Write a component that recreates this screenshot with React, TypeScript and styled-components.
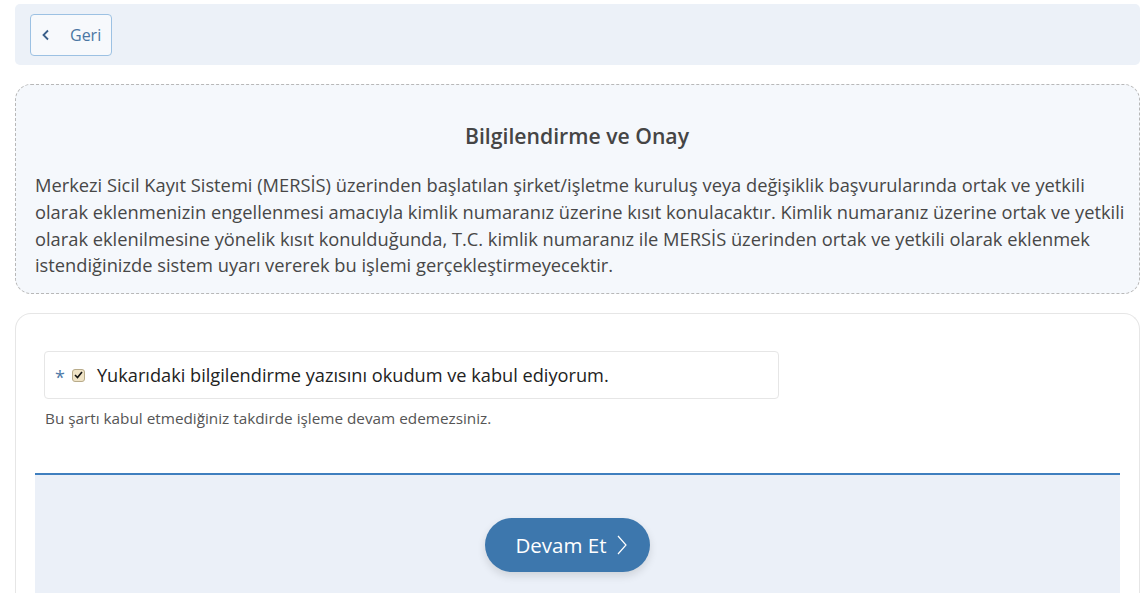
import React from "react";
import styled, { createGlobalStyle } from "styled-components";

const Global = createGlobalStyle`
  html, body { margin: 0; padding: 0; background: #fff; }
  body { font-family: "Open Sans", "Noto Sans", sans-serif; color: #444; }
  * { box-sizing: border-box; }
`;

const Page = styled.div`
  padding: 4px 1px 0 15px;
  display: flex;
  flex-direction: column;
  height: 593px;
  overflow: hidden;
`;

const TopBar = styled.div`
  background: #ecf1f8;
  border-radius: 5px;
  height: 61px;
  padding: 9px 15px;
  display: flex;
  align-items: center;
`;

const BackButton = styled.button`
  display: flex;
  align-items: center;
  gap: 19px;
  height: 42px;
  width: 82px;
  padding: 0 0 0 10px;
  border: 1px solid #9cc1e3;
  border-radius: 4px;
  background: #f7f9fc;
  color: #4a76a3;
  font-family: "Open Sans", sans-serif;
  font-size: 16px;
  cursor: pointer;
`;

const InfoBox = styled.div`
  margin-top: 19px;
  border: 1px dashed #b8b8b8;
  border-radius: 16px;
  background: #f5f8fc;
  padding: 37px 8px 14px 19px;
`;

const Title = styled.h2`
  margin: 0 0 22px;
  text-align: center;
  font-size: 21.2px;
  font-weight: 600;
  color: #454545;
  line-height: 28px;
  padding-right: 12px;
`;

const Paragraph = styled.p`
  margin: 0;
  font-size: 18.3px;
  line-height: 26.8px;
  color: #474747;
`;

const Card = styled.div`
  margin-top: 19px;
  border: 1px solid #e6e6e6;
  border-bottom: none;
  border-radius: 16px 16px 0 0;
  background: #fff;
  padding: 37px 19px 0 19px;
  flex: 1;
  display: flex;
  flex-direction: column;
`;

const Field = styled.label`
  margin-left: 9px;
  width: 735px;
  height: 48px;
  border: 1px solid #e6e6e6;
  border-radius: 4px;
  display: flex;
  align-items: center;
  padding-left: 10px;
`;

const Star = styled.span`
  color: #4d7aa8;
  font-size: 18px;
  margin-right: 7px;
  margin-top: 4px;
`;

const Box = styled.span`
  width: 13px;
  height: 13px;
  border: 1px solid #b8ab8a;
  border-radius: 3px;
  background: #efe3c6;
  display: flex;
  align-items: center;
  justify-content: center;
  margin-right: 12px;
`;

const FieldText = styled.span`
  font-size: 18.2px;
  color: #222;
`;

const Note = styled.div`
  margin: 9px 0 0 10px;
  font-size: 15.3px;
  color: #555;
`;

const Footer = styled.div`
  margin-top: 45px;
  border-top: 2px solid #3f7fbf;
  background: #ebf0f8;
  flex: 1;
  display: flex;
  justify-content: center;
  padding-top: 43px;
`;

const NextButton = styled.button`
  width: 165px;
  height: 54px;
  margin-right: 20px;
  border: none;
  border-radius: 27px;
  background: #3d77ad;
  color: #fff;
  font-family: "Open Sans", sans-serif;
  font-size: 20.5px;
  font-weight: 500;
  display: flex;
  align-items: center;
  justify-content: center;
  gap: 9px;
  box-shadow: 0 4px 8px rgba(0, 0, 0, 0.12);
  padding: 0 0 0 8px;
`;

export default function App() {
  return (
    <>
      <Global />
      <Page>
        <TopBar>
          <BackButton>
            <svg width="10" height="12" viewBox="0 0 10 12">
              <path d="M7 1.5 L2.5 6 L7 10.5" fill="none" stroke="#3a5f8a" strokeWidth="1.8" />
            </svg>
            Geri
          </BackButton>
        </TopBar>
        <InfoBox>
          <Title>Bilgilendirme ve Onay</Title>
          <Paragraph>
            Merkezi Sicil Kayıt Sistemi (MERSİS) üzerinden başlatılan şirket/işletme kuruluş veya değişiklik başvurularında ortak ve yetkili olarak eklenmenizin engellenmesi amacıyla kimlik numaranız üzerine kısıt konulacaktır. Kimlik numaranız üzerine ortak ve yetkili olarak eklenilmesine yönelik kısıt konulduğunda, T.C. kimlik numaranız ile MERSİS üzerinden ortak ve yetkili olarak eklenmek istendiğinizde sistem uyarı vererek bu işlemi gerçekleştirmeyecektir.
          </Paragraph>
        </InfoBox>
        <Card>
          <Field>
            <Star>*</Star>
            <Box>
              <svg width="9" height="8" viewBox="0 0 9 8">
                <path d="M1 4 L3.5 6.5 L8 1" fill="none" stroke="#111" strokeWidth="1.6" />
              </svg>
            </Box>
            <FieldText>Yukarıdaki bilgilendirme yazısını okudum ve kabul ediyorum.</FieldText>
          </Field>
          <Note>Bu şartı kabul etmediğiniz takdirde işleme devam edemezsiniz.</Note>
          <Footer>
            <NextButton>
              Devam Et
              <svg width="12" height="22" viewBox="0 0 12 22">
                <path d="M2 2 L10 11 L2 20" fill="none" stroke="#fff" strokeWidth="1.2" />
              </svg>
            </NextButton>
          </Footer>
        </Card>
      </Page>
    </>
  );
}
